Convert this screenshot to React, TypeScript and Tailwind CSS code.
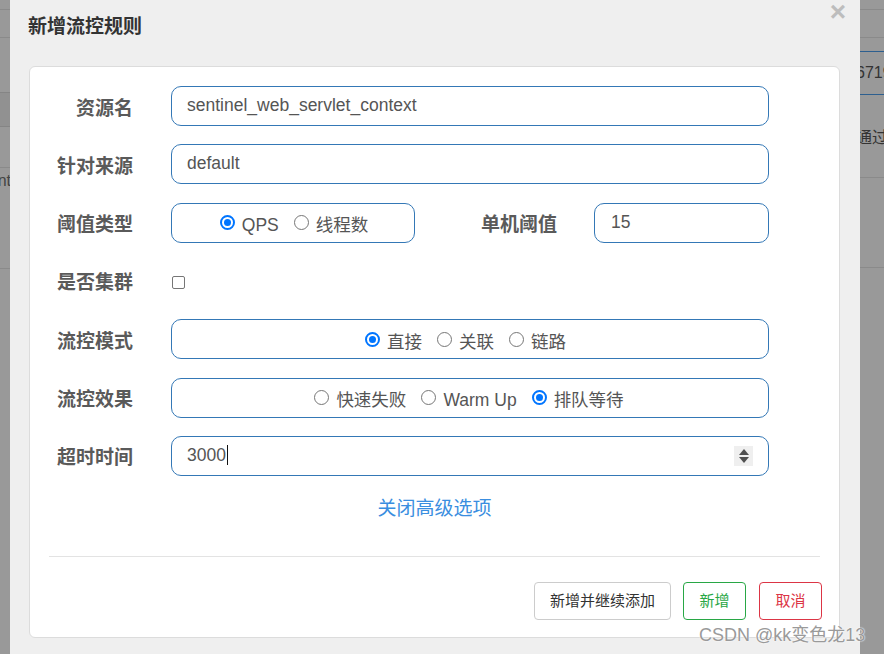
import type { ReactNode } from "react";

function Radio({ checked, label }: { checked?: boolean; label: string }) {
  return (
    <span className="flex items-center">
      {checked ? (
        <span className="w-[15px] h-[15px] rounded-full border-[2px] border-[#0075ff] bg-white flex items-center justify-center">
          <span className="w-[7px] h-[7px] rounded-full bg-[#0075ff]"></span>
        </span>
      ) : (
        <span className="w-[15px] h-[15px] rounded-full border border-[#767676] bg-white"></span>
      )}
      <span className="ml-[7px] mt-[5px] text-[17.5px] text-[#555] leading-[24px]">{label}</span>
    </span>
  );
}

function Label({ children, w = "w-[103px]" }: { children: ReactNode; w?: string }) {
  return (
    <div className={`${w} shrink-0 mt-[5px] text-right text-[19px] font-bold text-[#5a5a5a] leading-[24px]`}>
      {children}
    </div>
  );
}

function Box({ children, className }: { children?: ReactNode; className: string }) {
  return (
    <div
      className={`h-[40px] border border-[#3478b6] rounded-[10px] bg-white flex items-center text-[17.5px] text-[#555] ${className}`}
    >
      {children}
    </div>
  );
}

function Strip({ side }: { side: "left" | "right" }) {
  if (side === "left") {
    return (
      <div className="w-[10px] shrink-0 flex flex-col bg-[#999]">
        <div className="h-[10px] border-b border-[#8a8a8a]"></div>
        <div className="h-[28px] border-b border-[#8a8a8a]"></div>
        <div className="h-[54px]"></div>
        <div className="h-[35px] bg-[#919191] border-y border-[#858585]"></div>
        <div className="h-[41px] border-b border-[#8a8a8a]"></div>
        <div className="h-[101px] border-b border-[#8a8a8a] flex items-center justify-end text-[16px] text-[#444] overflow-hidden">
          <span className="-mr-[1px] -mt-[75px]">nt</span>
        </div>
        <div className="flex-1"></div>
      </div>
    );
  }
  return (
    <div className="w-[24px] shrink-0 flex flex-col bg-[#999] overflow-hidden">
      <div className="h-[10px] border-b border-[#8a8a8a]"></div>
      <div className="h-[28px] border-b border-[#8a8a8a]"></div>
      <div className="h-[14px] border-b border-[#2d5f8f]"></div>
      <div className="h-[43px] border-b border-[#2d5f8f] flex items-center text-[16px] text-[#333] whitespace-nowrap">
        <span className="-ml-[4px]">6719</span>
      </div>
      <div className="h-[83px] border-b border-[#8a8a8a] flex items-center text-[16px] text-[#333] whitespace-nowrap">
        <span className="-ml-[4px] font-['Noto_Sans_CJK_SC',sans-serif]">通过</span>
      </div>
      <div className="h-[90px] border-b border-[#8a8a8a]"></div>
      <div className="flex-1"></div>
    </div>
  );
}

export default function App() {
  return (
    <div className="w-[884px] h-[654px] flex bg-[#999] overflow-hidden relative font-['Liberation_Sans','Noto_Sans_CJK_SC',sans-serif]">
      <Strip side="left" />

      <div className="w-[850px] shrink-0 bg-[#efefef] flex flex-col">
        <div className="h-[66px] flex justify-between items-start pl-[18px] pr-[14px]">
          <h4 className="mt-[12px] text-[19px] font-bold text-[#333] leading-[26px] font-['Noto_Sans_CJK_SC',sans-serif]">
            新增流控规则
          </h4>
          <span className="-mt-[4px] text-[28px] font-bold text-[#bdbdbd] leading-[32px]">×</span>
        </div>

        <div className="ml-[19px] w-[811px] bg-white border border-[#dcdcdc] rounded-[6px] pt-[19px] pb-[17px] flex flex-col">
          <div className="flex flex-col gap-[18.33px]">
            <div className="flex items-center h-[40px]">
              <Label>资源名</Label>
              <Box className="ml-[38px] w-[598px] pl-[15px] pb-[2px]">sentinel_web_servlet_context</Box>
            </div>

            <div className="flex items-center h-[40px]">
              <Label>针对来源</Label>
              <Box className="ml-[38px] w-[598px] pl-[15px] pb-[2px]">default</Box>
            </div>

            <div className="flex items-center h-[40px]">
              <Label>阈值类型</Label>
              <Box className="ml-[38px] w-[244px] justify-center gap-[15px] pl-[2px]">
                <Radio checked label="QPS" />
                <Radio label="线程数" />
              </Box>
              <Label w="w-[142px]">单机阈值</Label>
              <Box className="ml-[37px] w-[175px] pl-[16px] pb-[2px]">15</Box>
            </div>

            <div className="flex items-center h-[40px]">
              <Label>是否集群</Label>
              <span className="ml-[39px] mt-[3px] w-[13px] h-[13px] border border-[#767676] rounded-[2px] bg-white"></span>
            </div>

            <div className="flex items-center h-[40px]">
              <Label>流控模式</Label>
              <Box className="ml-[38px] w-[598px] justify-center gap-[15px] pr-[9px]">
                <Radio checked label="直接" />
                <Radio label="关联" />
                <Radio label="链路" />
              </Box>
            </div>

            <div className="flex items-center h-[40px]">
              <Label>流控效果</Label>
              <Box className="ml-[38px] w-[598px] justify-center gap-[15px] pr-[2px]">
                <Radio label="快速失败" />
                <Radio label="Warm Up" />
                <Radio checked label="排队等待" />
              </Box>
            </div>

            <div className="flex items-center h-[40px]">
              <Label>超时时间</Label>
              <Box className="ml-[38px] w-[598px] pl-[15px] pr-[15px] justify-between">
                <span className="flex items-center pb-[1px]">
                  3000
                  <span className="ml-[1px] w-[1px] h-[20px] bg-[#111]"></span>
                </span>
                <span className="w-[19px] h-[20px] bg-[#efefef] flex flex-col items-center justify-center gap-[2px]">
                  <svg width="10" height="6" viewBox="0 0 10 6">
                    <path d="M0 6 L5 0 L10 6 Z" fill="#505050" />
                  </svg>
                  <svg width="10" height="6" viewBox="0 0 10 6">
                    <path d="M0 0 L10 0 L5 6 Z" fill="#505050" />
                  </svg>
                </span>
              </Box>
            </div>
          </div>

          <div className="mt-[21px] text-center text-[19px] leading-[24px] text-[#3a8ee0]">关闭高级选项</div>

          <div className="mx-[19px] mt-[35px] border-t border-[#e3e3e3]"></div>

          <div className="mt-[25px] pr-[17px] flex justify-end gap-[12px] text-[15px] leading-[20px]">
            <button className="w-[137px] h-[38px] border border-[#ccc] rounded-[4px] bg-white text-[#333]">
              新增并继续添加
            </button>
            <button className="w-[63px] h-[38px] border border-[#28a745] rounded-[4px] bg-white text-[#28a745]">
              新增
            </button>
            <button className="ml-[1px] w-[63px] h-[38px] border border-[#dc3545] rounded-[4px] bg-white text-[#dc3545]">
              取消
            </button>
          </div>
        </div>
      </div>

      <Strip side="right" />

      <div className="absolute left-[699px] top-[623px] text-[18px] leading-[24px] text-[#9a9a9a] [text-shadow:0_0_2px_#fff,0_0_1px_#fff] whitespace-nowrap">
        CSDN @kk变色龙13
      </div>
    </div>
  );
}
